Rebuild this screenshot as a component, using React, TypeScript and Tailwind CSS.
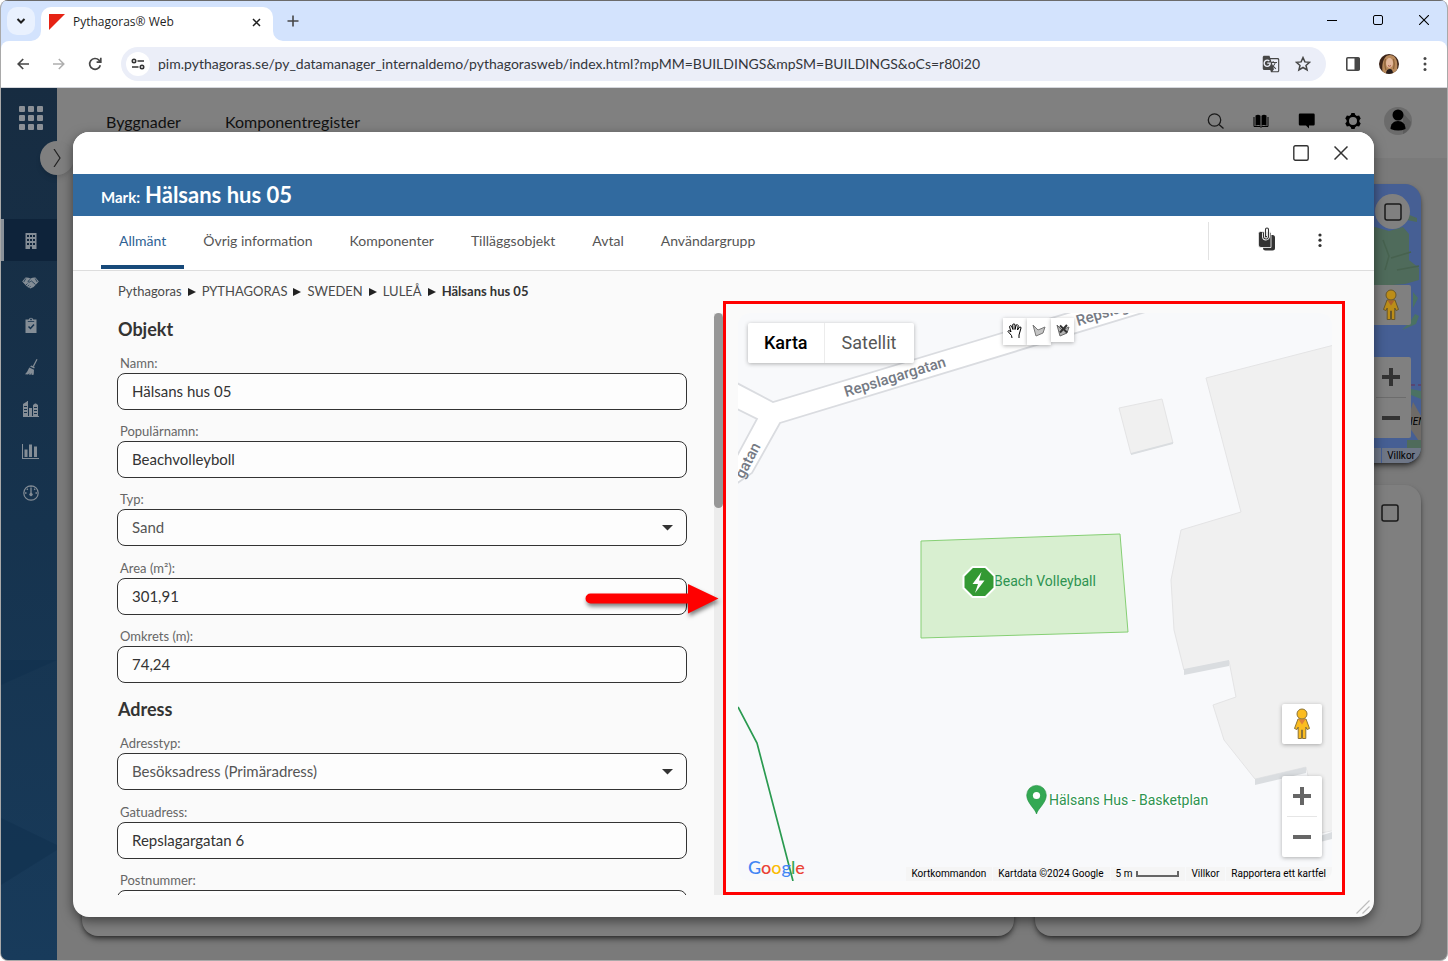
import React, { ReactNode } from 'react'
import { MdGTranslate } from 'react-icons/md'

interface FieldProps {
  id: string;
  label: string;
  value: string;
  type?: 'text' | 'select';
}

const URL_HOST = 'pim.pythagoras.se'
const URL_PATH = '/py_datamanager_internaldemo/pythagorasweb/index.html?mpMM=BUILDINGS&mpSM=BUILDINGS&oCs=r80i20'

const tabs = ['Allmänt', 'Övrig information', 'Komponenter', 'Tilläggsobjekt', 'Avtal', 'Användargrupp']

const crumbs = ['Pythagoras', 'PYTHAGORAS', 'SWEDEN', 'LULEÅ']

const objectFields: FieldProps[] = [
  { id: 'namn', label: 'Namn:', value: 'Hälsans hus 05' },
  { id: 'popularnamn', label: 'Populärnamn:', value: 'Beachvolleyboll' },
  { id: 'typ', label: 'Typ:', value: 'Sand', type: 'select' },
  { id: 'area', label: 'Area (m²):', value: '301,91' },
  { id: 'omkrets', label: 'Omkrets (m):', value: '74,24' },
]

const addressFields: FieldProps[] = [
  { id: 'adresstyp', label: 'Adresstyp:', value: 'Besöksadress (Primäradress)', type: 'select' },
  { id: 'gatuadress', label: 'Gatuadress:', value: 'Repslagargatan 6' },
  { id: 'postnummer', label: 'Postnummer:', value: '' },
]

/* ---------- browser chrome ---------- */

const TabStrip = () => (
  <div className="flex h-[41px] shrink-0 items-end border-t border-[#6b6b6b] bg-[#d3e3fd]">
    <button aria-label="Sök bland flikar" className="mb-[6px] ml-[6px] flex h-7 w-7 items-center justify-center rounded-[10px] bg-[#e9f1fe]">
      <svg width="10" height="10" viewBox="0 0 10 10" fill="none" stroke="#1f1f1f" strokeWidth="2"><path d="M1.5 3l3.5 3.5L8.5 3" /></svg>
    </button>
    <div className="relative ml-[6px] flex h-[34px] w-[232px] items-center rounded-t-[10px] bg-white pr-[11px] pb-1 pl-2">
      <svg className="absolute bottom-0 -left-[10px]" width="10" height="10"><path d="M10 0v10H0A10 10 0 0 0 10 0z" fill="#fff" /></svg>
      <svg className="absolute -right-[10px] bottom-0" width="10" height="10"><path d="M0 0v10h10A10 10 0 0 1 0 0z" fill="#fff" /></svg>
      <svg width="16" height="16"><path d="M0 0h16L0 16z" fill="#e62314" /></svg>
      <span className="ml-2 flex-1 text-xs text-[#1f1f1f]">Pythagoras® Web</span>
      <button aria-label="Stäng flik" className="flex h-3 w-3 items-center justify-center">
        <svg width="9" height="9" stroke="#1f1f1f" strokeWidth="1.5"><path d="M1 1l7 7M8 1L1 8" /></svg>
      </button>
    </div>
    <button aria-label="Ny flik" className="mb-[14px] ml-[14px]">
      <svg width="12" height="12" stroke="#474747" strokeWidth="1.6"><path d="M6 .5v11M.5 6h11" /></svg>
    </button>
    <div className="mb-4 ml-auto flex items-center gap-9 pr-[18px]">
      <button aria-label="Minimera"><svg width="10" height="10" stroke="#000"><path d="M0 5.5h10" /></svg></button>
      <button aria-label="Maximera"><svg width="10" height="10" fill="none" stroke="#000"><rect x=".5" y=".5" width="9" height="9" rx="1.5" /></svg></button>
      <button aria-label="Stäng"><svg width="10" height="10" stroke="#000" strokeWidth="1.1"><path d="M0 0l10 10M10 0L0 10" /></svg></button>
    </div>
  </div>
)

const Toolbar = () => (
  <div className="shrink-0 bg-[#d3e3fd]">
    <div className="flex h-[47px] items-center rounded-t-[8px] border-b border-[#d5d7dc] bg-white pr-5 pl-4 text-[#474747]">
      <button aria-label="Bakåt"><svg width="12" height="12" fill="none" stroke="#474747" strokeWidth="1.7"><path d="M12 6H1.2M6.2 1L1.2 6l5 5" /></svg></button>
      <button aria-label="Framåt" className="ml-6"><svg width="12" height="12" fill="none" stroke="#aeaeae" strokeWidth="1.5"><path d="M0 6h10.8M5.8 1l5 5-5 5" /></svg></button>
      <button aria-label="Läs in igen" className="ml-[23px]">
        <svg width="14" height="14" viewBox="0 0 14 14" fill="none" stroke="#474747" strokeWidth="1.7"><path d="M12.3 8.2A5.4 5.4 0 1 1 11 3.2L12.6 5M12.8 .8v4.4H8.6" /></svg>
      </button>
      <div className="ml-[19px] flex h-[34px] min-w-0 flex-1 items-center rounded-full bg-[#ebeef8] pr-[15px] pl-[5px]">
        <button aria-label="Visa webbplatsinformation" className="flex h-6 w-6 shrink-0 items-center justify-center rounded-full bg-white">
          <svg width="14" height="12" viewBox="0 0 14 12" fill="none" stroke="#333" strokeWidth="1.6"><circle cx="3" cy="3" r="1.7" /><path d="M6.5 3H13M1 9h6.5" /><circle cx="11" cy="9" r="1.7" /></svg>
        </button>
        <input
          aria-label="Adressfält"
          className="ml-2 min-w-0 flex-1 bg-transparent font-[Lato] text-sm text-[#33363b] outline-none"
          defaultValue={URL_HOST + URL_PATH}
        />
        <MdGTranslate size={18} color="#474747" />
        <svg className="ml-[15px]" width="16" height="16" viewBox="0 0 16 16" fill="none" stroke="#474747" strokeWidth="1.5"><path d="M8 1.6l1.9 4.3 4.7.4-3.6 3.1 1.1 4.6L8 11.5 3.9 14 5 9.4 1.4 6.3l4.7-.4z" /></svg>
      </div>
      <button aria-label="Sidopanel" className="ml-5">
        <svg width="14" height="14"><rect x=".8" y=".8" width="12.4" height="12.4" rx="1" fill="none" stroke="#474747" strokeWidth="1.6" /><path d="M8.5 1h5v12h-5z" fill="#474747" /></svg>
      </button>
      <button aria-label="Profil" className="ml-[19px]">
        <svg width="20" height="20" viewBox="0 0 20 20">
          <clipPath id="face"><circle cx="10" cy="10" r="10" /></clipPath>
          <g clipPath="url(#face)">
            <rect width="20" height="20" fill="#3c2418" />
            <path d="M4 20C2 12 4 1 11 1s9 9 6 19z" fill="#b98a5c" />
            <ellipse cx="10.5" cy="9" rx="3.5" ry="5" fill="#e3b79a" />
            <path d="M6.5 5Q5 10 7 16M14.5 5q1.5 5 0 10" stroke="#8f6239" strokeWidth="1.3" fill="none" />
            <path d="M7 20c0-4 2-5 4-5s3 2 3 5z" fill="#241c1c" />
            <path d="M9 11.5q1.5 1.5 3 0" stroke="#a8584c" fill="none" />
          </g>
        </svg>
      </button>
      <button aria-label="Meny" className="ml-6">
        <svg width="4" height="14" fill="#474747"><circle cx="2" cy="1.6" r="1.5" /><circle cx="2" cy="7" r="1.5" /><circle cx="2" cy="12.4" r="1.5" /></svg>
      </button>
    </div>
  </div>
)

/* ---------- dimmed page behind the dialog ---------- */

const BuildingIcon = () => (
  <svg width="12" height="16" fill="#848d96">
    <path fillRule="evenodd" d="M.5 0h11v16H.5zM2 2v2h2V2zm3 0v2h2V2zm3 0v2h2V2zM2 6v2h2V6zm3 0v2h2V6zm3 0v2h2V6zM2 10v2h2v-2zm3 0v2h2v-2zm3 0v2h2v-2zM5 13.5V16h2v-2.5z" />
  </svg>
)

const HandshakeIcon = () => (
  <svg width="17" height="12" viewBox="0 0 17 12">
    <path d="M3.500 .5Q6 .2 8.500 1.500 11 .2 13.500 .5L16.800 4.500 14.500 7Q12 10.500 8.500 11.500 5 10.500 2.500 7L.2 4.500z" fill="#848d96" />
    <path d="M3.800 1.500L1.800 5M13.200 1.500l2 3.500M8.500 2L5.800 4.500q1.200 1.500 2.700 0l1-.5L13.500 7.500M4 8l1.500-1.500M5.500 9.500L7 7.800M7.300 10.500l1.200-1.300" fill="none" stroke="#16334e" strokeWidth=".8" />
  </svg>
)

const ClipboardIcon = () => (
  <svg width="12" height="16">
    <path d="M.5 2.5h3.200a2.400 2.400 0 0 1 4.600 0h3.200V16H.5z" fill="#848d96" />
    <circle cx="6" cy="2.4" r=".9" fill="#16334e" />
    <path d="M2.800 4.500h6.400" stroke="#16334e" strokeWidth=".8" />
    <path d="M3.500 9.500l2 2 3.500-4" fill="none" stroke="#16334e" strokeWidth="1.5" />
  </svg>
)

const BroomIcon = () => (
  <svg width="14" height="16" fill="#848d96">
    <path d="M12.500 0l1 .4L10 7.500l-1.200-.5zM7.500 6.500l3.200 1.600-.5 1.400-4.200-2zM5.300 8.500l4.700 2.200c-.3 2 .2 3.500-.6 5.300l-2-.2.5-1.800-1.500 1.700-1.500-.2.8-1.500-1.700 1.400L1 15.200C3 13.500 4 11 5.300 8.500z" />
  </svg>
)

const CityIcon = () => (
  <svg width="16" height="16" fill="#848d96">
    <path fillRule="evenodd" d="M0 15V3l4-2.500V0h1v15h1V7h3v8h1V4l2-1.500h1L15 4v11h1v1H0zM1 5v1h3V5zm0 3v1h3V8zm0 3v1h3v-1zm10-5v1h3V6zm0 3v1h3V9zm0 3v1h3v-1z" />
  </svg>
)

const ChartIcon = () => (
  <svg width="17" height="15" fill="#848d96"><path d="M0 0h1v14h16v1H0zM2.500 5.500h3v7.500h-3zM7 .5h3V13H7zM12 2.500h3V13h-3z" /></svg>
)

const GaugeIcon = () => (
  <svg width="16" height="16" fill="none" stroke="#848d96">
    <circle cx="8" cy="8" r="7.2" strokeWidth="1.2" />
    <path d="M8 3v6M8 1v1.500M2 8h1.500M12.500 8H14M3.800 3.800l1 1M12.200 3.800l-1 1" strokeWidth="1.3" />
    <circle cx="8" cy="9.5" r="1.3" fill="#848d96" />
  </svg>
)

const sideItems: { name: string; icon: ReactNode }[] = [
  { name: 'Byggnader', icon: <BuildingIcon /> },
  { name: 'Avtal', icon: <HandshakeIcon /> },
  { name: 'Uppgifter', icon: <ClipboardIcon /> },
  { name: 'Städ', icon: <BroomIcon /> },
  { name: 'Fastigheter', icon: <CityIcon /> },
  { name: 'Statistik', icon: <ChartIcon /> },
  { name: 'Mätare', icon: <GaugeIcon /> },
]

const Sidebar = () => (
  <nav className="relative flex w-14 shrink-0 flex-col bg-linear-to-b from-[#172c41] via-[#16334e] to-[#183b5b] text-[#848d96]">
    <svg className="absolute bottom-0 left-0" width="56" height="300" fill="#10304e" opacity=".5"><path d="M0 0V25L56 0zM0 158L56 185V190L0 225z" /></svg>
    <button aria-label="Appar" className="mt-[18px] ml-[18px] grid w-6 grid-cols-3 gap-[3px]">
      {[...Array(9)].map((_, i) => (
        <span key={i} className="h-[6px] w-[6px] rounded-[1px] bg-[#8b9096]" />
      ))}
    </button>
    <ul className="relative mt-[89px]">
      {sideItems.map((item, i) => (
        <li key={item.name}>
          <button
            aria-label={item.name}
            className={i === 0
              ? 'flex h-[42px] w-full items-center justify-center border-l-3 border-[#8a9199] bg-[#0e233a] pt-[2px]'
              : 'flex h-[42px] w-full items-center justify-center pt-[2px] pl-[3px]'}
          >
            {item.icon}
          </button>
        </li>
      ))}
    </ul>
    <button aria-label="Visa meny" className="absolute top-[53px] left-[39px] z-10 flex h-[34px] w-[34px] items-center justify-center rounded-full bg-[#7f7f7f] shadow-md">
      <svg width="8" height="18" fill="none" stroke="#222" strokeWidth="1.2"><path d="M1 0l6 9-6 9" /></svg>
    </button>
  </nav>
)

const AppHeader = () => (
  <header className="flex h-[70px] shrink-0 items-start bg-[#808080] pr-[35px] pl-[49px] text-base text-[#111]">
    <a href="#byggnader" className="mt-[22px]">Byggnader</a>
    <a href="#komponentregister" className="mt-[22px] ml-11">Komponentregister</a>
    <div className="mt-[19px] ml-auto flex items-center">
      <button aria-label="Sök" className="mr-7"><svg width="18" height="18" fill="none" stroke="#1a1a1a" strokeWidth="1.3"><circle cx="8.5" cy="8" r="6.2" /><path d="M13 12.500l4.500 4" /></svg></button>
      <button aria-label="Handbok" className="mr-7">
        <svg width="18" height="14" viewBox="0 0 18 14"><path d="M3.500 1.500c2-1.200 3.500-1 5 .2v10c-1.500-1-3-1-5 0zM14.500 1.500c-2-1.200-3.500-1-5 .2v10c1.500-1 3-1 5 0z" fill="#000" /><path d="M2 3v9.500h6l1 .8 1-.8h6V3" fill="none" stroke="#000" /></svg>
      </button>
      <button aria-label="Meddelanden" className="mr-7"><svg width="18" height="16"><path d="M2 .5h13.500a1.200 1.200 0 0 1 1.200 1.200v9.600a1.200 1.200 0 0 1-1.200 1.200h-4.500v3l-3-3H2A1.200 1.200 0 0 1 .8 11.300V1.700A1.200 1.200 0 0 1 2 .5z" fill="#000" /></svg></button>
      <button aria-label="Inställningar" className="mr-[22px]">
        <svg width="18" height="18" viewBox="-9 -9 18 18">
          <circle r="5.2" fill="none" stroke="#000" strokeWidth="2.4" />
          {[0, 60, 120, 180, 240, 300].map((a) => (
            <path key={a} d="M-2.500 -5.500L-1.600 -8h3.200l.9 2.500z" transform={`rotate(${a})`} fill="#000" />
          ))}
        </svg>
      </button>
      <button aria-label="Konto">
        <svg width="28" height="28"><circle cx="14" cy="14" r="14" fill="#6b6b6b" /><path d="M19 6l8 9a14 14 0 0 1-8 12z" fill="#5c5c5c" /><circle cx="14" cy="8" r="5.5" fill="#000" /><path d="M6.500 22c0-5 3-8 7.500-8s7.500 3 7.500 8q-7 3-15 0z" fill="#000" /></svg>
      </button>
    </div>
  </header>
)

const Pegman = () => (
  <svg width="18" height="32" viewBox="0 0 18 32">
    <g fill="#fbbc20" stroke="#8a7338" strokeWidth="1">
      <path d="M5 11h8l3.500 9.500-2.500 1-1.200-2.500V30.500H9.500V22h-1v8.500H5.200V19L4 21.500l-2.500-1z" />
      <circle cx="9" cy="6" r="5" />
    </g>
    <path d="M5.500 11.500h7L9 16.500z" fill="#e0813a" />
  </svg>
)

const BackgroundMap = () => (
  <section className="relative h-[279px] shrink-0 overflow-hidden rounded-2xl bg-[#465f94] shadow-md shadow-black/50">
    <svg className="absolute top-0 right-0" width="60" height="279">
      <path d="M0 46L14 43l14 4 14-4 6 7v26l10 8v12l-14 4-12 1H0z" fill="#4f6b5b" />
      <path d="M0 142q14 6 12 18T0 168zM46 30l10 4v4l-10-2z" fill="#4f6b5b" />
      <path d="M22 56l6 16-4 14M30 74l20-6M36 86l22-4" stroke="#47624f" strokeWidth="1.5" fill="none" />
      <path d="M52 108l5 6-5 10zM54 130l4 2-3 8-14 6 8-8zM50 205l10 2v8l-10-4z" fill="#4b7263" />
      <path d="M46 240l6-22 8 14v28z" fill="#6f6b67" />
      <path d="M46 256h14v16H46z" fill="#4f6b5b" />
      <path d="M48 201h12" stroke="#5d3f68" strokeDasharray="6 3" strokeWidth="1.5" />
    </svg>
    <span className="absolute right-0 bottom-[34px] w-[11px] overflow-hidden font-[Roboto] text-[10px] whitespace-nowrap text-black italic">IEN</span>
    <button aria-label="Maximera kartan" className="absolute top-[10px] right-[11px] flex h-[35px] w-[35px] items-center justify-center rounded-full bg-[#808080]">
      <svg width="18" height="18" fill="none" stroke="#1a1a1a" strokeWidth="1.5"><rect x="1" y="1" width="16" height="16" rx="2" /></svg>
    </button>
    <div className="absolute top-[101px] right-[10px] flex h-10 w-10 items-center justify-center rounded-[2px] bg-[#808080]"><span className="brightness-75"><Pegman /></span></div>
    <div className="absolute top-[173px] right-[10px] flex h-[81px] w-10 flex-col items-center rounded-[2px] bg-[#808080]">
      <button aria-label="Zooma in bakgrund" className="flex h-10 w-full items-center justify-center"><svg width="18" height="18" fill="#333"><path d="M7 0h4v7h7v4h-7v7H7v-7H0V7h7z" /></svg></button>
      <span className="h-px w-[30px] bg-[#6c6c6c]" />
      <button aria-label="Zooma ut bakgrund" className="flex h-10 w-full items-center justify-center"><svg width="18" height="4" fill="#333"><path d="M0 0h18v4H0z" /></svg></button>
    </div>
    <div className="absolute right-0 bottom-0 flex h-[15px] w-[60px] items-center justify-end bg-[#6f7787] pr-[6px] font-[Roboto] text-[10px] text-black">
      <span className="mr-[5px] h-full w-px bg-[#465f94]" />Villkor
    </div>
  </section>
)

/* ---------- dialog ---------- */

const Field = ({ id, label, value, type }: FieldProps) => (
  <div className={type === 'select' ? 'mb-3 flex flex-col' : 'mb-[11px] flex flex-col'}>
    <label htmlFor={id} className="h-5 pl-[3px] text-[13px] leading-5 text-[#666]">{label}</label>
    {type === 'select' ? (
      <div className="relative">
        <select id={id} className="h-[37px] w-full appearance-none rounded-[8px] border border-[#333] bg-[#fdfdfd] px-[14px] text-[15px] text-[#555]">
          <option>{value}</option>
        </select>
        <svg className="pointer-events-none absolute top-4 right-[14px]" width="11" height="6" fill="#333"><path d="M0 0h11L5.500 5.500z" /></svg>
      </div>
    ) : (
      <input id={id} defaultValue={value} className="h-[37px] w-full rounded-[8px] border border-[#333] bg-[#fdfdfd] px-[14px] pb-[2px] text-[15px] text-[#333]" />
    )}
  </div>
)

const StreetMap = () => (
  <svg className="absolute top-0 left-0" width="594" height="568" fontFamily="Roboto, sans-serif">
    <g fill="#fff" stroke="#dadce0" strokeWidth="1.8">
      <path d="M-5 68L35 89 340 -3H414L42 110 14 160 -8 175V156L19 106-5 94z" />
    </g>
    <g fill="#f0f0f0" stroke="#e4e4e5">
      <path d="M381 95l43-9 11 44-42 11z" />
      <path d="M600 31L468 65l35 134-60 18-10 50 3 50 10 40 45-9 7 36-23 8 11 35 31 39 51-12 15 66 20-4z" />
    </g>
    <g fill="#dadde0">
      <path d="M446 356l45-9v6l-45 9zM517 466l51-12v6l-51 12zM582 523l12-4v7l-12 3zM393 140l42-11v2l-42 11z" />
    </g>
    <path d="M183 228l199-7 8 98-207 6z" fill="#d8efd0" stroke="#86cf74" />
    <path d="M0 394l19 36 36 138" fill="none" stroke="#2a9a50" strokeWidth="1.7" />
    <g fontSize="15" fontWeight="500" fill="#757a84">
      <text transform="translate(108 84) rotate(-17)">Repslagargatan</text>
      <text transform="translate(340 13) rotate(-17)">Repslagargatan</text>
      <text transform="translate(23 133) rotate(-62)" textAnchor="end">gatan</text>
    </g>
    <g fontSize="14" fill="#2e9350">
      <text x="256" y="273">Beach Volleyball</text>
      <text x="311" y="492" stroke="#fff" strokeWidth="2" paintOrder="stroke">Hälsans Hus - Basketplan</text>
    </g>
    <path d="M234.500 254h13l9 9v12l-9 9h-13l-9-9v-12z" fill="#339933" stroke="#fff" strokeWidth="2" />
    <path d="M243.500 259l-9 12h5.500l-3 9 9.500-12.500H241z" fill="#fff" />
    <path d="M298.500 501c-1-5-9.800-11-9.800-18.800a9.800 9.800 0 0 1 19.600 0c0 7.800-8.800 13.800-9.800 18.800z" fill="#34a853" stroke="#1e8e3e" strokeWidth=".6" />
    <circle cx="298.5" cy="482.5" r="3.6" fill="#fff" />
  </svg>
)

const MapPanel = () => (
  <div className="relative h-full w-full overflow-hidden rounded-xl bg-[#f8f9fb] font-[Roboto]">
    <StreetMap />
    <div className="absolute top-[10px] left-[10px] flex gap-px rounded-[2px] bg-[#ececec] text-lg shadow-[0_1px_4px_rgba(0,0,0,0.3)]">
      <button className="h-10 rounded-l-[2px] bg-white px-4 font-medium text-black">Karta</button>
      <button className="h-10 rounded-r-[2px] bg-white px-[17px] text-[#565656]">Satellit</button>
    </div>
    <div className="absolute top-[5px] right-[258px] flex items-start">
      <button aria-label="Flytta kartan" className="flex h-[27px] w-6 items-center justify-center bg-white pb-[2px] shadow-[0_1px_4px_rgba(0,0,0,0.3)]">
        <svg width="16" height="16" fill="#fff" stroke="#000" strokeLinejoin="round"><path d="M5 15L4.500 12.500 1 8.500Q1 7 3 8L4 9 2.500 3.500Q3 2 4.500 3L6 6.500 5.700 1.500Q7 .3 8 1.500V6.500L9.200 2Q10.500 1 11.200 2.500L10.500 7 12.500 4Q14 3.500 14 5L12 12v3" /></svg>
      </button>
      <button aria-label="Rita yta" className="flex h-[27px] w-6 items-center justify-center bg-white pb-[3px] shadow-[0_1px_4px_rgba(0,0,0,0.3)]">
        <svg width="14" height="13" fill="#c4c4c4" stroke="#777"><path d="M1 1l5 5 7-3-2 6-7 3z" /></svg>
      </button>
      <button aria-label="Ta bort yta" className="flex h-6 w-[23px] items-center justify-center bg-white shadow-[0_1px_4px_rgba(0,0,0,0.3)]">
        <svg width="14" height="13" fill="#b5b5b5" stroke="#666"><path d="M1 1l5 5 7-3-2 6-7 3z" /><path d="M4 1.500l7 7M11 1L4 8.500" stroke="#333" strokeWidth="2" /></svg>
      </button>
    </div>
    <div className="absolute right-[10px] bottom-[137px] flex h-10 w-10 items-center justify-center rounded-[2px] bg-white shadow-[0_1px_4px_rgba(0,0,0,0.3)]"><Pegman /></div>
    <div className="absolute right-[10px] bottom-6 flex h-[81px] w-10 flex-col items-center rounded-[2px] bg-white shadow-[0_1px_4px_rgba(0,0,0,0.3)]">
      <button aria-label="Zooma in" className="flex h-10 w-full items-center justify-center"><svg width="18" height="18" fill="#666"><path d="M7 0h4v7h7v4h-7v7H7v-7H0V7h7z" /></svg></button>
      <span className="h-px w-[30px] bg-[#e6e6e6]" />
      <button aria-label="Zooma ut" className="flex h-10 w-full items-center justify-center"><svg width="18" height="4" fill="#666"><path d="M0 0h18v4H0z" /></svg></button>
    </div>
    <a href="#google" aria-label="Google" className="absolute bottom-[3px] left-[10px] font-[Lato] text-lg leading-[22px] font-medium">
      <span className="text-[#4285f4]">G</span><span className="text-[#ea4335]">o</span><span className="text-[#fbbc05]">o</span><span className="text-[#4285f4]">g</span><span className="text-[#34a853]">l</span><span className="text-[#ea4335]">e</span>
    </a>
    <div className="absolute right-0 bottom-0 flex h-[14px] items-stretch gap-px text-[10px] leading-[14px] text-black">
      <button className="bg-[#f5f5f5] pr-[6px] pl-[5px]">Kortkommandon</button>
      <span className="bg-[#f5f5f5] pr-[6px] pl-[5px]">Kartdata ©2024 Google</span>
      <button className="flex items-center gap-1 bg-[#f5f5f5] pr-[6px] pl-[5px]">5 m <span className="h-[6px] w-[43px] border-2 border-t-0 border-[#666]" /></button>
      <a href="#villkor" className="bg-[#f5f5f5] pr-[6px] pl-[5px]">Villkor</a>
      <a href="#kartfel" className="bg-[#f5f5f5] pr-[6px] pl-[5px]">Rapportera ett kartfel</a>
    </div>
  </div>
)

const Dialog = () => (
  <section role="dialog" aria-label="Mark: Hälsans hus 05" className="absolute top-11 right-[73px] bottom-[43px] left-[72px] z-20 flex flex-col overflow-hidden rounded-2xl bg-[#fafafa] shadow-[0_4px_12px_rgba(0,0,0,0.5)]">
    <div className="flex h-[42px] shrink-0 items-center justify-end gap-[25px] bg-white pr-[26px]">
      <button aria-label="Maximera dialog"><svg width="16" height="16" fill="none" stroke="#333" strokeWidth="1.4"><rect x=".8" y=".8" width="14.4" height="14.4" rx="1.5" /></svg></button>
      <button aria-label="Stäng dialog"><svg width="14" height="14" stroke="#333" strokeWidth="1.5"><path d="M.5 .5l13 13M13.500 .5l-13 13" /></svg></button>
    </div>
    <h1 className="flex h-[42px] shrink-0 items-baseline gap-[5px] bg-[#316a9f] pl-7 leading-[42px] font-bold text-white">
      <span className="text-[15px]">Mark:</span>
      <span className="text-[22px]">Hälsans hus 05</span>
    </h1>
    <div className="flex h-[55px] shrink-0 items-center border-b border-[#ddd] bg-white pl-7 text-sm text-[#555]">
      <div role="tablist" className="flex h-full gap-px">
        {tabs.map((tab, i) => (
          <button
            key={tab}
            role="tab"
            aria-selected={i === 0}
            className={i === 0 ? 'mb-px border-b-4 border-[#174a7a] px-[18px] text-[#2f6294]' : 'mb-px border-b-4 border-transparent px-[18px]'}
          >
            {tab}
          </button>
        ))}
      </div>
      <div className="mb-1 ml-auto flex h-[38px] items-center border-l border-[#e2e2e2] pr-[52px] pl-[49px]">
        <button aria-label="Bilagor" className="mb-1">
          <svg width="17" height="24" viewBox="0 0 17 24">
            <rect x="5" y="8" width="12" height="15.5" rx="2.5" fill="#333" />
            <path d="M2.500 4.500h8.500a2 2 0 0 1 2 2v14H3A2.500 2.500 0 0 1 .4 18V6.500a2 2 0 0 1 2.100-2z" fill="#333" stroke="#fff" strokeWidth=".8" />
            <path d="M5.500 5.500v4a2.500 2.500 0 0 0 5 0V2.500a1.500 1.500 0 0 0-3 0V9" fill="none" stroke="#fff" strokeWidth="2.8" />
            <path d="M5.500 5.500v4a2.500 2.500 0 0 0 5 0V2.500a1.500 1.500 0 0 0-3 0V9" fill="none" stroke="#333" strokeWidth="1.1" />
          </svg>
        </button>
        <button aria-label="Fler val" className="ml-[43px]"><svg width="4" height="16" fill="#333"><circle cx="2" cy="2" r="1.6" /><circle cx="2" cy="7.2" r="1.6" /><circle cx="2" cy="12.5" r="1.6" /></svg></button>
      </div>
    </div>
    <div className="flex min-h-0 flex-1 pr-[29px] pb-[22px] pl-11">
      <div className="flex min-w-0 flex-1 flex-col">
        <nav className="flex h-[42px] shrink-0 items-center pl-px text-[13px] text-[#4a4a4a]">
          {crumbs.map((crumb) => (
            <span key={crumb} className="flex items-center">
              <a href="#crumb">{crumb}</a>
              <svg className="mx-[6px]" width="8" height="8" fill="#222"><path d="M0 0l8 4-8 4z" /></svg>
            </span>
          ))}
          <span className="font-bold text-[#333]">Hälsans hus 05</span>
        </nav>
        <div className="flex min-h-0 flex-1">
          <form className="mr-[27px] min-w-0 flex-1 overflow-hidden pt-px">
            <h2 className="mt-[3px] mb-3 pl-px text-lg leading-6 font-bold text-[#333]">Objekt</h2>
            {objectFields.map((field) => <Field key={field.id} {...field} />)}
            <h2 className="mt-[14px] mb-3 pl-px text-lg leading-6 font-bold text-[#333]">Adress</h2>
            {addressFields.map((field) => <Field key={field.id} {...field} />)}
          </form>
          <div className="w-[9px] bg-[#ececec]"><div className="h-[195px] rounded-[5px] bg-[#979797]" /></div>
        </div>
      </div>
      <div className="relative mt-[30px] w-[622px] shrink-0 border-3 border-[#f00] pt-[9px] pr-[10px] pb-[11px] pl-3">
        <MapPanel />
        <svg className="absolute top-[277px] -left-[141px] drop-shadow-[1px_3px_2px_rgba(0,0,0,0.5)]" width="134" height="36" fill="#f00">
          <path d="M5.500 12.500H103V3l30.500 14.500L103 32.500v-10H5.500a5 5 0 0 1 0-10z" />
        </svg>
      </div>
    </div>
    <svg className="absolute right-1 bottom-[3px]" width="14" height="14" stroke="#bdbdbd" strokeWidth="1.2"><path d="M.5 13.500l13-13M6.500 13.500l7-7" /></svg>
  </section>
)

const App = () => {
  return (
    <div className="flex h-screen flex-col overflow-hidden rounded-[8px] border-r border-b border-l border-[#a9a9a9] bg-[#7a7a7a] font-['Open_Sans',sans-serif]">
      <TabStrip />
      <Toolbar />
      <div className="relative flex min-h-0 flex-1 font-[Lato,sans-serif]">
        <Sidebar />
        <main className="flex min-w-0 flex-1 flex-col">
          <AppHeader />
          <div className="flex min-h-0 flex-1 gap-[21px] pt-[26px] pr-[26px] pb-6 pl-[25px]">
            <section className="flex-1 rounded-2xl bg-[#7f7f7f] shadow-md shadow-black/50" />
            <div className="flex w-[386px] flex-col gap-[22px]">
              <BackgroundMap />
              <section className="flex-1 rounded-2xl bg-[#7f7f7f] pt-[19px] pr-[22px] text-right shadow-md shadow-black/50">
                <button aria-label="Maximera kort"><svg width="18" height="18" fill="none" stroke="#1a1a1a" strokeWidth="1.5"><rect x="1" y="1" width="16" height="16" rx="2" /></svg></button>
              </section>
            </div>
          </div>
        </main>
        <Dialog />
      </div>
    </div>
  )
}

export default App
